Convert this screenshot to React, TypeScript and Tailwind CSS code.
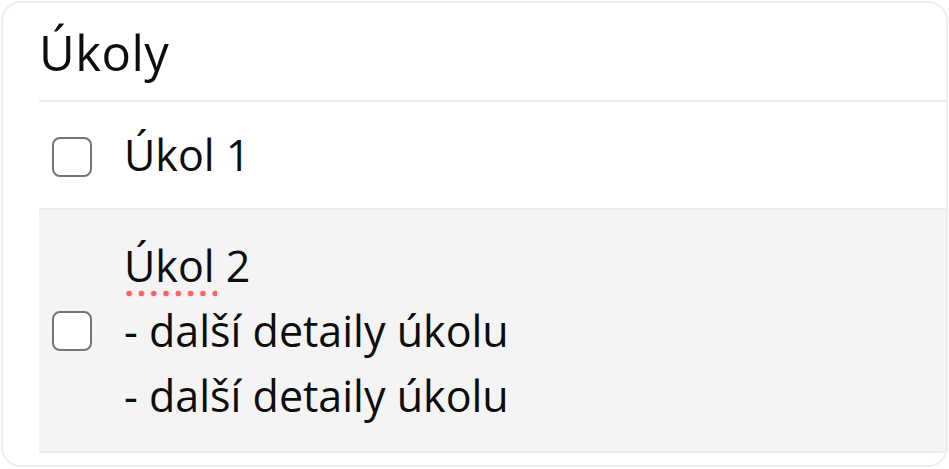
import React from "react";

function Box() {
  return <div className="w-[40px] h-[40px] shrink-0 rounded-[8px] border-2 border-[#757575] bg-white" />;
}

export default function App() {
  return (
    <div className="w-[949px] h-[469px] bg-white p-px" style={{ fontFamily: '"Open Sans", sans-serif' }}>
      <div className="h-[466px] w-[947px] rounded-[20px] border-2 border-[#ededf4] pl-[36px] flex flex-col text-[#0d0d0d]">
        <div className="h-[99px] flex items-center border-b-2 border-[#ebebf4]">
          <h1 className="text-[49px] font-medium leading-none pt-[2px] tracking-[0.5px]">Úkoly</h1>
        </div>
        <div className="h-[108px] flex items-center border-b-2 border-[#ebebf4]">
          <div className="ml-[13px] mt-[4px]"><Box /></div>
          <div className="ml-[32px] text-[43px] leading-[64px]">Úkol 1</div>
        </div>
        <div className="h-[243px] flex items-center bg-[#f4f4f4] border-b-2 border-[#ebebf4]">
          <div className="ml-[13px]"><Box /></div>
          <div className="ml-[32px] text-[43px] leading-[65px]">
            <div>
              <span className="relative inline-block">
                Úkol
                <span className="absolute left-[-1px] right-[-2px] bottom-[1px] h-[7px] bg-[radial-gradient(circle,#f56565_2.6px,transparent_3.2px)] bg-[length:12.3px_7px] bg-repeat-x" />
              </span>{" "}
              2
            </div>
            <div>- další detaily úkolu</div>
            <div>- další detaily úkolu</div>
          </div>
        </div>
      </div>
    </div>
  );
}
